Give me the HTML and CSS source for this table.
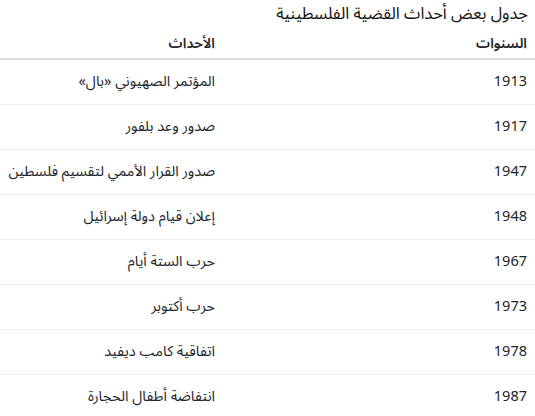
FILE: index.html
```html
<!DOCTYPE html>
<html lang="ar" dir="rtl">
<head>
<meta charset="utf-8">
<link rel="stylesheet" href="styles.css">
</head>
<body>
<table class="events">
  <caption class="events-title">جدول بعض أحداث القضية الفلسطينية</caption>
  <thead>
    <tr><th class="col-year">السنوات</th><th class="col-event">الأحداث</th></tr>
  </thead>
  <tbody>
    <tr><td>1913</td><td>المؤتمر الصهيوني «بال»</td></tr>
    <tr><td>1917</td><td>صدور وعد بلفور</td></tr>
    <tr><td>1947</td><td>صدور القرار الأممي لتقسيم فلسطين</td></tr>
    <tr><td>1948</td><td>إعلان قيام دولة إسرائيل</td></tr>
    <tr><td>1967</td><td>حرب الستة أيام</td></tr>
    <tr><td>1973</td><td>حرب أكتوبر</td></tr>
    <tr><td>1978</td><td>اتفاقية كامب ديفيد</td></tr>
    <tr><td>1987</td><td>انتفاضة أطفال الحجارة</td></tr>
  </tbody>
</table>
</body>
</html>
```
FILE: styles.css
```css
html, body {
  margin: 0;
  padding: 0;
  background: #fff;
}
body {
  font-family: "Noto Sans Arabic", "Noto Sans", "DejaVu Sans", sans-serif;
  color: #212529;
  font-size: 14px;
  line-height: 20px;
}
.events {
  width: 535px;
  border-collapse: collapse;
  direction: rtl;
  table-layout: fixed;
}
.events-title {
  caption-side: top;
  text-align: right;
  font-size: 16.5px;
  line-height: 24px;
  padding: 2px 7px 0;
  color: #111;
}
.col-year { width: 296px; }
.col-event { width: 223px; }
.events th {
  text-align: right;
  font-weight: 600;
  padding: 8px 8px 4px;
  border-bottom: 2px solid #dedede;
}
.events td {
  text-align: right;
  font-size: 14.5px;
  padding: 12px 8px;
  border-bottom: 1px solid #efefef;
  white-space: nowrap;
  overflow: visible;
}
```
